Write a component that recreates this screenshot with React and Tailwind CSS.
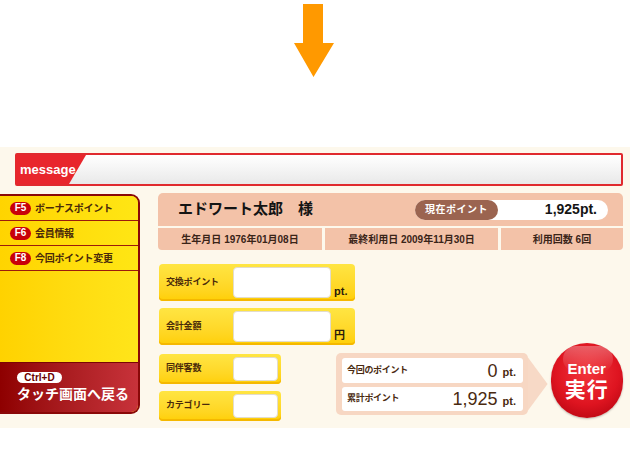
import React from 'react';

const font = "font-['Liberation_Sans','Noto_Sans_CJK_JP',sans-serif]";

function FKey({ k }) {
    return (
        <span className="flex items-center justify-center w-[21px] h-[13px] rounded-full bg-[#c8000a] text-white text-[10px] font-bold leading-none">
            {k}
        </span>
    );
}

function MenuItem({ k, label }) {
    return (
        <div className="h-[25px] flex items-center gap-[4px] pl-[10px] border-b border-[#9b1b0b] bg-gradient-to-r from-[#ffd400] to-[#ffe614]">
            <FKey k={k} />
            <span className="text-[10px] font-bold text-[#4a2a0a] tracking-[-0.3px]">{label}</span>
        </div>
    );
}

function Field({ label, unit, wide, tall }) {
    return (
        <div className={`flex items-stretch rounded-[4px] bg-gradient-to-b from-[#ffe542] to-[#ffcf00] shadow-[inset_0_-2px_0_#f5b800] ${wide ? 'w-[196px]' : 'w-[122px]'} ${tall ? 'h-[37px] py-[3px]' : 'h-[30px] py-[3px]'}`}>
            <div className="w-[74px] pl-[7px] flex items-center text-[9px] font-bold text-[#4a2a0a] tracking-[-0.2px]">{label}</div>
            <div className={`bg-white rounded-[4px] border border-[#e2dccb] ${wide ? 'w-[98px]' : 'w-[45px]'}`} />
            {unit && <div className="flex items-end pl-[3px] text-[11px] font-bold text-[#2a1a0a] leading-none pb-[1px]">{unit}</div>}
        </div>
    );
}

export default function App() {
    return (
        <div className={`w-[630px] h-[450px] bg-white ${font}`}>
            <div className="h-[147px] flex justify-center pt-[4px]">
                <svg width="40" height="74" viewBox="0 0 40 74" className="ml-[-2px]">
                    <path d="M9 0 H29 V39 H40 L19.5 73 L0 39 H9 Z" fill="#ff9900" />
                </svg>
            </div>

            <div className="h-[281px] bg-[#fdf8ec] pt-[6px]">
                <div className="ml-[15px] mr-[7px] h-[33px] flex border-2 border-[#e02a2e] rounded-[2px] bg-gradient-to-b from-white to-[#e9e9e9]">
                    <div className="w-[70px] -ml-[1px] bg-[#e8262c] text-white text-[13px] font-bold flex items-center pl-[4px] [clip-path:polygon(0_0,100%_0,calc(100%-17px)_100%,0_100%)]">
                        message
                    </div>
                </div>

                <div className="flex items-start mt-[7px]">
                    <div className="mt-[1px] w-[140px] h-[220px] flex flex-col border-2 border-l-0 border-[#8a0808] rounded-r-[9px] overflow-hidden bg-gradient-to-r from-[#ffd200] to-[#ffe51a]">
                        <MenuItem k="F5" label="ボーナスポイント" />
                        <MenuItem k="F6" label="会員情報" />
                        <MenuItem k="F8" label="今回ポイント変更" />
                        <div className="flex-1" />
                        <div className="h-[50px] border-t border-[#7a0505] bg-gradient-to-r from-[#8e0000] to-[#c8323a] pl-[17px] pt-[9px]">
                            <div className="flex items-center justify-center w-[45px] h-[11px] rounded-full bg-white text-[#6a0000] text-[10px] font-bold leading-none">
                                Ctrl+D
                            </div>
                            <div className="mt-[4px] text-white text-[14px] font-bold leading-none whitespace-nowrap">タッチ画面へ戻る</div>
                        </div>
                    </div>

                    <div className="ml-[18px] w-[465px]">
                        <div className="h-[33px] bg-[#f3c2a8] rounded-t-[5px] flex items-center pl-[20px] pr-[15px]">
                            <div className="flex-1 text-[15px] font-bold text-[#141414]">エドワート太郎　様</div>
                            <div className="w-[193px] h-[20px] bg-white rounded-full flex items-center">
                                <div className="w-[83px] h-[20px] rounded-full bg-[#9b6450] text-white text-[10px] font-bold flex items-center justify-center tracking-[0.5px]">
                                    現在ポイント
                                </div>
                                <div className="flex-1 text-right pr-[11px] text-[14px] font-bold text-[#141414]">1,925pt.</div>
                            </div>
                        </div>
                        <div className="mt-[2px] h-[22px] flex gap-[3px] text-[10px] font-bold text-[#3a2418]">
                            <div className="w-[164px] bg-[#f3c2a8] rounded-bl-[4px] flex items-center justify-center">生年月日 1976年01月08日</div>
                            <div className="w-[173px] bg-[#f3c2a8] flex items-center justify-center">最終利用日 2009年11月30日</div>
                            <div className="flex-1 bg-[#f3c2a8] rounded-br-[4px] flex items-center justify-center">利用回数 6回</div>
                        </div>

                        <div className="mt-[14px] ml-[1px] flex flex-col gap-[7px]">
                            <Field label="交換ポイント" unit="pt." wide tall />
                            <Field label="会計金額" unit="円" wide tall />
                        </div>

                        <div className="mt-[8px] ml-[1px] flex items-start">
                            <div className="flex flex-col gap-[7px] mt-[1px]">
                                <Field label="同伴客数" />
                                <Field label="カテゴリー" />
                            </div>
                            <div className="ml-[55px] w-[196px] h-[62px] bg-[#f7d7c3] rounded-[5px] pl-[6px] pr-[5px] pt-[5px] flex flex-col gap-[4px]">
                                <div className="h-[25px] bg-white rounded-[3px] flex items-center pl-[5px] pr-[7px] text-[#4a2a10]">
                                    <span className="flex-1 text-[9px] font-bold tracking-[-0.3px]">今回のポイント</span>
                                    <span className="text-[18px] leading-none">0</span>
                                    <span className="ml-[5px] text-[11px] font-bold mt-[4px]">pt.</span>
                                </div>
                                <div className="h-[24px] bg-white rounded-[3px] flex items-center pl-[5px] pr-[7px] text-[#4a2a10]">
                                    <span className="flex-1 text-[9px] font-bold tracking-[-0.3px]">累計ポイント</span>
                                    <span className="text-[18px] leading-none">1,925</span>
                                    <span className="ml-[5px] text-[11px] font-bold mt-[4px]">pt.</span>
                                </div>
                            </div>
                            <svg width="20" height="54" viewBox="0 0 20 54" className="mt-[4px]">
                                <path d="M0 0 L20 27 L0 54 Z" fill="#f7d9c6" />
                            </svg>
                            <div className="relative ml-[3px] -mt-[10px] w-[74px] h-[75px] rounded-full bg-[radial-gradient(circle_at_50%_40%,#f2343a,#de1420_55%,#a8000c)] shadow-[0_1px_2px_rgba(0,0,0,0.25)] flex flex-col items-center justify-center text-white font-bold overflow-hidden">
                                <div className="absolute top-[3px] left-[12px] w-[50px] h-[26px] rounded-full bg-gradient-to-b from-white/30 to-white/0" />
                                <div className="relative text-[15px] leading-none">Enter</div>
                                <div className="relative mt-[3px] text-[21px] leading-none tracking-[1px]">実行</div>
                            </div>
                        </div>
                    </div>
                </div>
            </div>
        </div>
    );
}
